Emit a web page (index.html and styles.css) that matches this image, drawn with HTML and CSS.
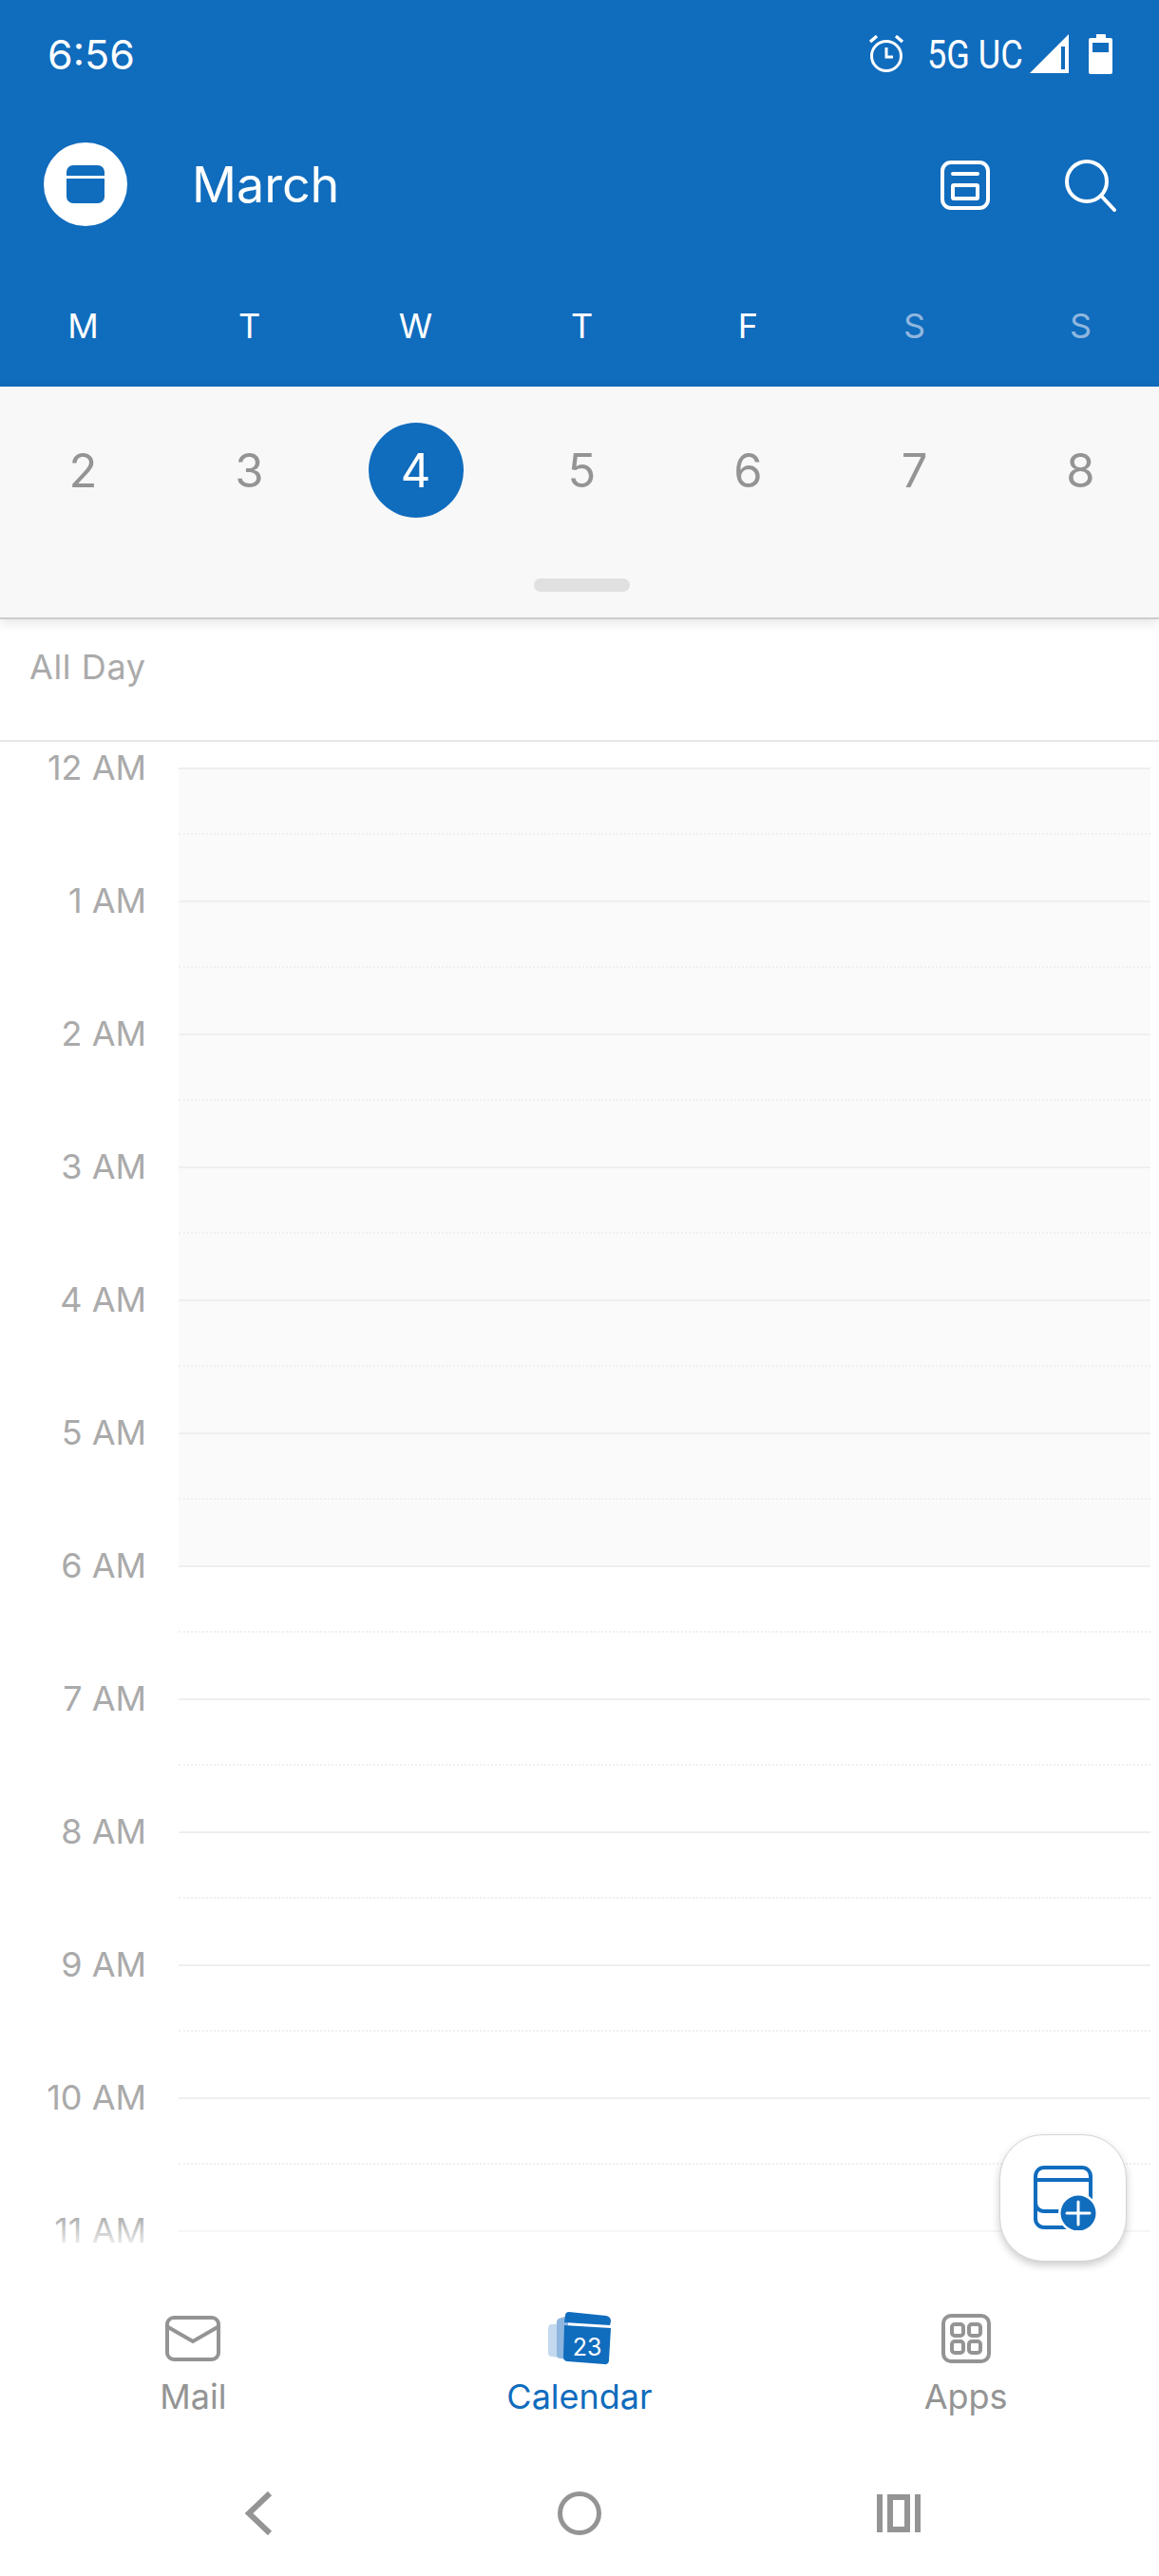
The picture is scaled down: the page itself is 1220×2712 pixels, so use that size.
FILE: index.html
```html
<!DOCTYPE html>
<html lang="en">
<head>
    <meta charset="UTF-8">
    <title>Calendar</title>
    <link rel="stylesheet" href="styles.css">
</head>
<body>
    <header class="top">
        <div class="status">
            <span class="clock">6:56</span>
            <div class="status-icons">
                <svg class="ic-alarm" width="38" height="40" viewBox="0 0 38 40" fill="none" stroke="#fff" stroke-width="3">
                    <circle cx="19" cy="23" r="15.5"/>
                    <path d="M19 14v10h7" stroke-width="3"/>
                    <path d="M2 8l7-6M36 8l-7-6" stroke-width="3.4"/>
                </svg>
                <span class="net">5G UC</span>
                <svg class="ic-signal" width="41" height="41" viewBox="0 0 41 41">
                    <path d="M41 0v41H0z" fill="#fff"/>
                    <path d="M33 13h4v24h-4z" fill="#106cbd"/>
                </svg>
                <svg class="ic-battery" width="25" height="42" viewBox="0 0 25 42">
                    <path d="M10 0h7a1 1 0 0 1 1 1v3h5a2 2 0 0 1 2 2v34a2 2 0 0 1-2 2H2a2 2 0 0 1-2-2V6a2 2 0 0 1 2-2h6V1a1 1 0 0 1 2-1z" fill="#fff"/>
                    <path d="M4 9h17v10H4z" fill="#106cbd"/>
                </svg>
            </div>
        </div>
        <div class="title-bar">
            <div class="avatar">
                <svg width="40" height="40" viewBox="0 0 40 40">
                    <path d="M0 11V7a7 7 0 0 1 7-7h26a7 7 0 0 1 7 7v4z" fill="#106cbd"/>
                    <path d="M0 14h40v19a7 7 0 0 1-7 7H7a7 7 0 0 1-7-7z" fill="#106cbd"/>
                </svg>
            </div>
            <h1 class="month">March</h1>
            <svg class="ic-panel" width="52" height="52" viewBox="0 0 52 52" fill="none" stroke="#fff" stroke-width="4">
                <rect x="2" y="2" width="48" height="48" rx="9"/>
                <path d="M13 14h26" stroke-linecap="round"/>
                <rect x="13" y="26" width="26" height="14" rx="1"/>
            </svg>
            <svg class="ic-search" width="56" height="56" viewBox="0 0 56 56" fill="none" stroke="#fff" stroke-width="4" stroke-linecap="round">
                <circle cx="24" cy="24" r="21"/>
                <path d="M39 39l14 15"/>
            </svg>
        </div>
        <div class="week">
            <span>M</span><span>T</span><span>W</span><span>T</span><span>F</span>
            <span class="weekend">S</span><span class="weekend">S</span>
        </div>
    </header>

    <section class="dates">
        <div class="date-row">
            <span class="date">2</span>
            <span class="date">3</span>
            <span class="date today">4</span>
            <span class="date">5</span>
            <span class="date">6</span>
            <span class="date">7</span>
            <span class="date">8</span>
        </div>
        <div class="handle"></div>
    </section>

    <div class="all-day">All Day</div>

    <main class="hours">
        <div class="hour off"><span class="hour-label">12 AM</span><div class="slot"><div class="half"></div></div></div>
        <div class="hour off"><span class="hour-label">1 AM</span><div class="slot"><div class="half"></div></div></div>
        <div class="hour off"><span class="hour-label">2 AM</span><div class="slot"><div class="half"></div></div></div>
        <div class="hour off"><span class="hour-label">3 AM</span><div class="slot"><div class="half"></div></div></div>
        <div class="hour off"><span class="hour-label">4 AM</span><div class="slot"><div class="half"></div></div></div>
        <div class="hour off"><span class="hour-label">5 AM</span><div class="slot"><div class="half"></div></div></div>
        <div class="hour"><span class="hour-label">6 AM</span><div class="slot"><div class="half"></div></div></div>
        <div class="hour"><span class="hour-label">7 AM</span><div class="slot"><div class="half"></div></div></div>
        <div class="hour"><span class="hour-label">8 AM</span><div class="slot"><div class="half"></div></div></div>
        <div class="hour"><span class="hour-label">9 AM</span><div class="slot"><div class="half"></div></div></div>
        <div class="hour"><span class="hour-label">10 AM</span><div class="slot"><div class="half"></div></div></div>
        <div class="hour last"><span class="hour-label">11 AM</span><div class="slot"></div></div>
        <div class="fade"></div>
    </main>

    <button class="fab">
        <svg width="66" height="68" viewBox="0 0 66 68" fill="none">
            <path d="M2 15h58M53 48H11a9 9 0 0 1-9-9V11a9 9 0 0 1 9-9h40a9 9 0 0 1 9 9v30M2 11v45a9 9 0 0 0 9 9h36" stroke="#106cbd" stroke-width="4"/>
            <circle cx="47" cy="50" r="21" fill="#fff"/>
            <circle cx="47" cy="50" r="18.5" fill="#106cbd"/>
            <path d="M47 38v24M35 50h24" stroke="#fff" stroke-width="3" stroke-linecap="round"/>
        </svg>
    </button>

    <nav class="tabs">
        <div class="tab">
            <svg width="58" height="48" viewBox="0 0 58 48" fill="none" stroke="#949494" stroke-width="4">
                <rect x="2" y="2" width="54" height="44" rx="7"/>
                <path d="M3 12l26 15 26-15"/>
            </svg>
            <span>Mail</span>
        </div>
        <div class="tab active">
            <svg width="68" height="56" viewBox="0 0 68 56">
                <path d="M6 13l7-1v36l-8-1a4 4 0 0 1-4-4V17a4 4 0 0 1 5-4z" fill="#c3d9ef"/>
                <path d="M12 7l10-3v46l-8-1a4 4 0 0 1-4-4V11a4 4 0 0 1 2-4z" fill="#8fb6de"/>
                <path d="M23 0l39 4a6 6 0 0 1 5 6l-1 4-48-3 1-7a4 4 0 0 1 4-4z" fill="#106cbd"/>
                <path d="M18 14l49 3-2 34a4 4 0 0 1-5 4l-39-3a5 5 0 0 1-4-5z" fill="#106cbd"/>
                <text x="42" y="46" text-anchor="middle" class="cal-num">23</text>
            </svg>
            <span>Calendar</span>
        </div>
        <div class="tab">
            <svg width="52" height="52" viewBox="0 0 52 52" fill="none" stroke="#949494" stroke-width="4">
                <rect x="2" y="2" width="48" height="48" rx="8"/>
                <rect x="11" y="11" width="12" height="12" rx="3"/>
                <rect x="29" y="11" width="12" height="12" rx="3"/>
                <rect x="11" y="29" width="12" height="12" rx="3"/>
                <rect x="29" y="29" width="12" height="12" rx="3"/>
            </svg>
            <span>Apps</span>
        </div>
    </nav>

    <div class="sysnav">
        <svg width="30" height="46" viewBox="0 0 30 46" fill="none" stroke="#949494" stroke-width="6">
            <path d="M27 2L5 23l22 21"/>
        </svg>
        <svg width="46" height="46" viewBox="0 0 46 46" fill="none" stroke="#949494" stroke-width="5">
            <circle cx="23" cy="23" r="20.5"/>
        </svg>
        <svg width="46" height="40" viewBox="0 0 46 40" fill="none" stroke="#949494" stroke-width="6">
            <path d="M3 0v40M43 0v40"/>
            <rect x="14" y="3" width="18" height="34"/>
        </svg>
    </div>
</body>
</html>
```

FILE: styles.css
```css
* {
    box-sizing: border-box;
}
body {
    margin: 0;
    width: 1220px;
    height: 2712px;
    overflow: hidden;
    position: relative;
    display: flex;
    flex-direction: column;
    background: #fff;
    font-family: Inter, "Noto Sans", sans-serif;
}

/* blue header */
.top {
    height: 407px;
    background: #106cbd;
    color: #fff;
    flex: none;
}
.status {
    height: 114px;
    padding: 36px 49px 0 50px;
    display: flex;
    justify-content: space-between;
    align-items: flex-start;
}
.clock {
    font-size: 43px;
    line-height: 42px;
}
.status-icons {
    display: flex;
    align-items: flex-start;
}
.ic-alarm {
    margin-right: 24px;
}
.net {
    font-family: Roboto, sans-serif;
    font-size: 42px;
    line-height: 42px;
    margin-top: 1px;
    width: 108px;
    white-space: nowrap;
    transform: scaleX(0.86);
    transform-origin: left center;
}
.ic-signal {
    margin-right: 21px;
}
.title-bar {
    height: 161px;
    padding: 0 44px 0 46px;
    display: flex;
    align-items: center;
}
.avatar {
    width: 88px;
    height: 88px;
    border-radius: 50%;
    background: #fff;
    display: flex;
    align-items: center;
    justify-content: center;
    margin-top: -2px;
}
.month {
    flex: 1;
    margin: 0 0 0 68px;
    font-size: 52px;
    font-weight: 400;
}
.ic-panel {
    margin-right: 78px;
}

/* the seven day columns run a little past the right edge */
.week {
    display: grid;
    grid-template-columns: repeat(7, 175px);
    text-align: center;
    font-size: 36px;
    line-height: 44px;
    margin-top: 46px;
}
.weekend {
    color: #8fb6de;
}

/* date strip */
.dates {
    height: 245px;
    flex: none;
    background: #f8f8f8;
    border-bottom: 2px solid #ccc;
    box-shadow: 0 3px 12px rgba(0, 0, 0, 0.12);
    position: relative;
    padding-top: 38px;
}
.date-row {
    display: grid;
    grid-template-columns: repeat(7, 175px);
    justify-items: center;
}
.date {
    width: 100px;
    height: 100px;
    display: flex;
    align-items: center;
    justify-content: center;
    border-radius: 50%;
    font-size: 49px;
    color: #949494;
}
.today {
    background: #106cbd;
    color: #fff;
}
.handle {
    width: 101px;
    height: 14px;
    margin: 64px 0 0 562px;
    border-radius: 7px;
    background: #e0e0e0;
}

.all-day {
    height: 129px;
    flex: none;
    padding: 28px 0 0 31px;
    border-bottom: 2px solid #e8e8e8;
    font-size: 36px;
    line-height: 44px;
    letter-spacing: 0.6px;
    color: #aaa;
}

/* hours */
.hours {
    height: 1581px;
    flex: none;
    padding-top: 27px;
    position: relative;
}
.hour {
    height: 140px;
    display: flex;
}
.hour.last {
    height: 14px;
}
.hour-label {
    width: 188px;
    flex: none;
    padding-right: 34px;
    text-align: right;
    font-size: 36px;
    line-height: 0;
    color: #aaa;
}
.slot {
    flex: 1;
    margin-right: 9px;
    border-top: 2px solid #efefef;
}
.half {
    height: 69px;
    border-bottom: 2px dotted #efefef;
}
.off .slot {
    background: #fafafa;
}
.fade {
    position: absolute;
    left: 0;
    right: 0;
    bottom: 0;
    height: 30px;
    background: linear-gradient(rgba(255, 255, 255, 0), rgba(255, 255, 255, 0.75));
}

.fab {
    position: absolute;
    left: 1052px;
    top: 2247px;
    width: 134px;
    height: 134px;
    padding: 0 0 0 3px;
    border: 1px solid #d4d4d4;
    border-radius: 46px;
    background: #fff;
    box-shadow: 0 4px 8px rgba(0, 0, 0, 0.2);
    display: flex;
    align-items: center;
    justify-content: center;
}

/* bottom tabs */
.tabs {
    height: 218px;
    flex: none;
    display: grid;
    grid-template-columns: repeat(3, 1fr);
    padding-top: 72px;
}
.tab {
    display: flex;
    flex-direction: column;
    align-items: center;
    color: #949494;
    font-size: 36px;
}
.tab svg {
    height: 56px;
    margin-bottom: 11px;
}
.tab span {
    line-height: 44px;
}
.active {
    color: #106cbd;
}
.cal-num {
    font-family: Inter, sans-serif;
    font-size: 25px;
    fill: #fff;
}

/* android nav */
.sysnav {
    flex: 1;
    display: grid;
    grid-template-columns: 27.4% 45.2% 27.4%;
    padding-top: 43px;
    align-items: start;
    justify-items: center;
}
.sysnav svg:first-child {
    justify-self: end;
    margin-right: 47px;
}
.sysnav svg:last-child {
    justify-self: start;
    margin: 3px 0 0 37px;
}
```
